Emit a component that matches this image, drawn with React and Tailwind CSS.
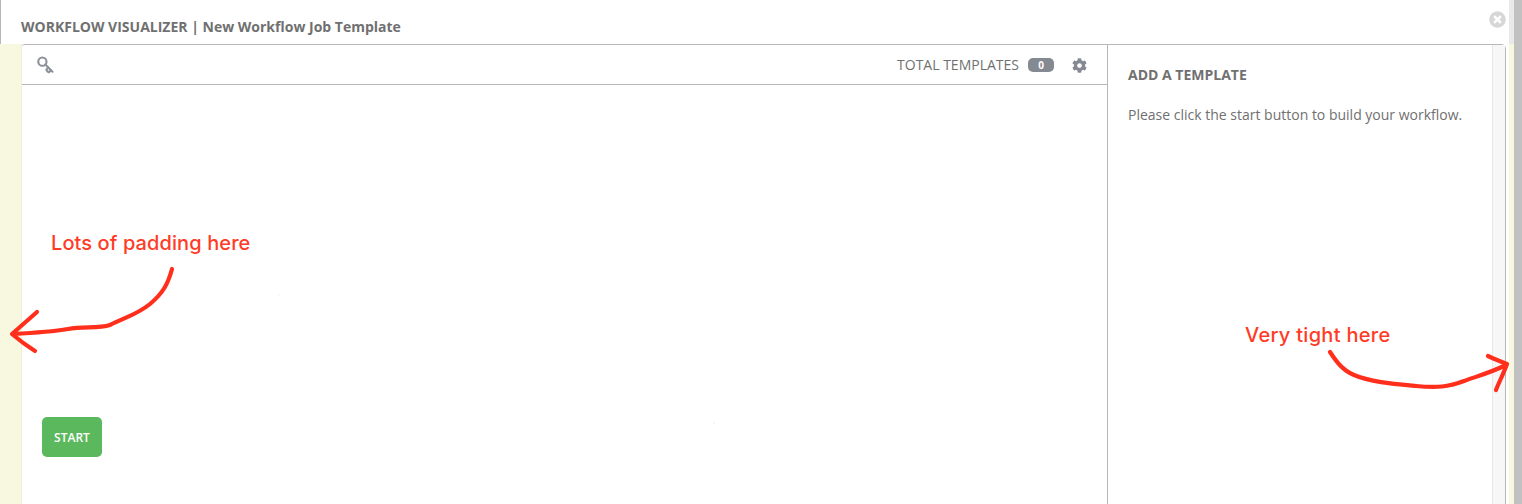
import React from "react";
import { FaCog, FaTimesCircle } from "react-icons/fa";
import { Key } from "lucide-react";

const sans = "font-['Open_Sans',sans-serif]";

export default function App() {
  return (
    <div className={`relative flex h-[504px] w-full overflow-hidden bg-white text-[#707070] ${sans}`}>
      <div className="flex min-w-0 flex-1 flex-col">
        <header className="relative flex h-[44px] shrink-0 items-center border-l border-l-[#b7b7b7] pl-[20px] pr-[5px]">
          <h1 className="mt-[10px] text-[14px] font-bold leading-none text-[#707070]">
            WORKFLOW VISUALIZER | New Workflow Job Template
          </h1>
          <FaTimesCircle className="absolute right-[8px] top-[11px] h-[17px] w-[17px] text-[#d7d7d7]" />
        </header>
        <div className="flex min-h-0 flex-1">
          <div className="w-[22px] shrink-0 border-r border-r-[#f0f0dc] bg-[#f7f8df]" />
          <main className="flex min-w-0 flex-1 rounded-tr-[5px] rounded-tl-[3px] border-r border-t border-[#b7b7b7]">
            <section className="flex w-[1086px] shrink-0 flex-col border-r border-r-[#b7b7b7]">
              <div className="flex h-[40px] shrink-0 items-center border-b border-b-[#b7b7b7] pl-[14px] pr-[20px]">
                <Key className="h-[18px] w-[18px] rotate-90 text-[#8d9199]" strokeWidth={2.8} />
                <span className="ml-auto text-[14px] leading-none text-[#707070]">TOTAL TEMPLATES</span>
                <span className="ml-[9px] flex h-[14px] w-[26px] items-center justify-center rounded-[5px] bg-[#848992] text-[10px] font-bold leading-none text-white">0</span>
                <FaCog className="ml-[18px] mt-[2px] h-[15px] w-[15px] text-[#848992]" />
              </div>
              <div className="flex flex-1 flex-col justify-end pb-[47px] pl-[20px]">
                <button className="h-[40px] w-[60px] rounded-[5px] bg-[#5cb85c] pt-[2px] text-[12px] font-semibold leading-none text-white">START</button>
              </div>
            </section>
            <aside className="flex min-w-0 flex-1">
              <div className="min-w-0 flex-1 pl-[20px] pt-[22px]">
                <h2 className="text-[14px] font-bold leading-[16px] text-[#707070]">ADD A TEMPLATE</h2>
                <p className="mt-[24px] whitespace-nowrap text-[14px] leading-[16px] text-[#707070]">Please click the start button to build your workflow.</p>
              </div>
              <div className="w-[13px] shrink-0 border-l border-l-[#e8e8e8] bg-[#f7f7f7]" />
            </aside>
          </main>
          <div className="w-[3px] shrink-0" />
          <div className="w-[5px] shrink-0 bg-[#f7f8df]" />
        </div>
      </div>
      <div className="w-[8px] shrink-0 bg-[#c1c1c1]" />
      <div className="absolute right-[8px] top-0 h-[44px] w-[5px] bg-[#e9e9e9]" />

      <span className="absolute left-[51px] top-[230px] font-['Inter',sans-serif] text-[20px] font-medium leading-[26px] tracking-[0.1px] text-[#ff3b25]">Lots of padding here</span>
      <span className="absolute left-[1245px] top-[322px] font-['Inter',sans-serif] text-[20px] font-medium leading-[26px] tracking-[0.3px] text-[#ff3b25]">Very tight here</span>

      <svg className="pointer-events-none absolute inset-0" width="1522" height="504" fill="none" stroke="#ff2f1c" strokeWidth="4.2" strokeLinecap="round" strokeLinejoin="round">
        <path d="M172 269C168 284 163 293 150 304C138 314 124 318 110 325C98 329 84 326 68 329C50 332 32 333 13 334" />
        <path d="M37 312C29 319 20 327 12 334C19 340 27 346 35 351" />
        <path d="M1330 352C1336 361 1342 370 1354 375C1370 382 1395 384 1416 386C1437 388 1448 387 1464 381C1478 376 1492 372 1506 365" />
        <path d="M1488 356C1494 359 1500 361 1507 364C1503 375 1499 382 1496 390" />
        <circle cx="278.5" cy="295" r="0.5" fill="#d8d8d8" stroke="none" />
        <circle cx="714" cy="423" r="0.5" fill="#c8c8c8" stroke="none" />
      </svg>
    </div>
  );
}
